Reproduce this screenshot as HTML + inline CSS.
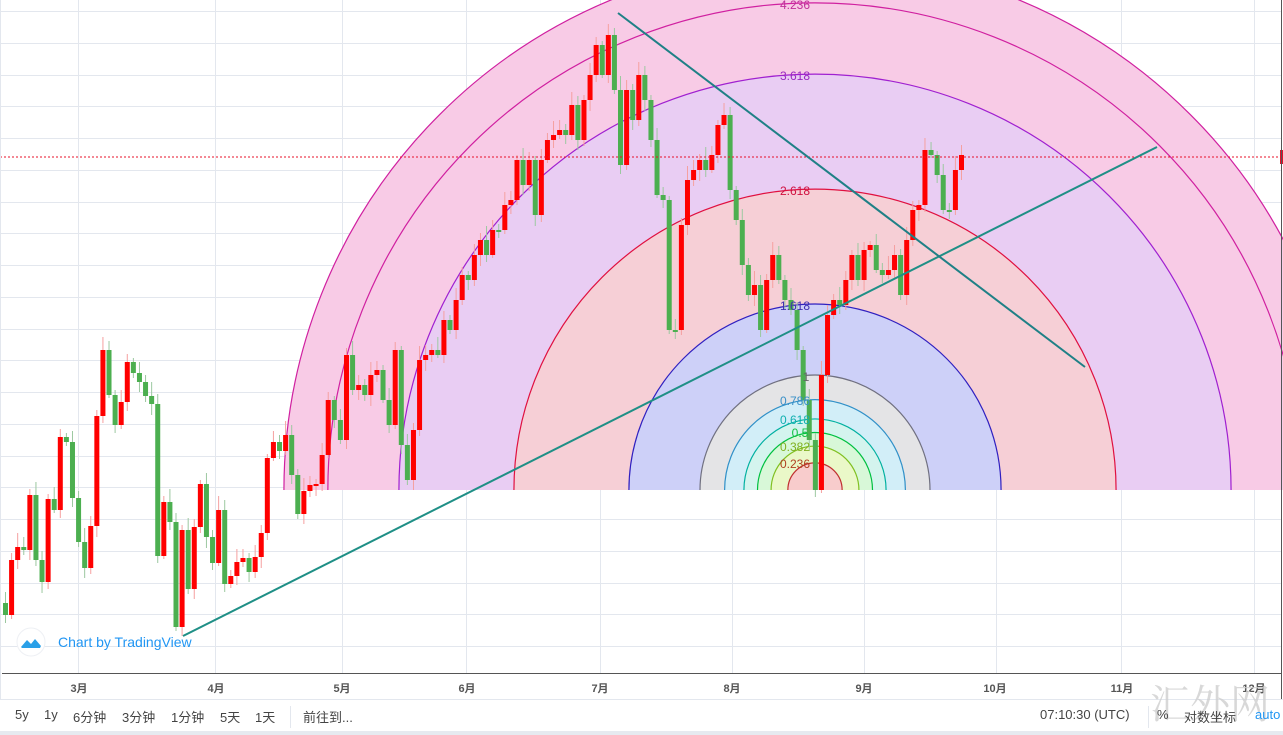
<!DOCTYPE html>
<html><head><meta charset="utf-8">
<style>
html,body{margin:0;padding:0;background:#fff;width:1283px;height:735px;overflow:hidden;font-family:"Liberation Sans","Noto Sans CJK SC",sans-serif;}
svg{position:absolute;left:0;top:0}
.bb{position:absolute;top:700px;height:32px;left:0;width:1283px;font-size:13px;color:#444}
.bb span{position:absolute;top:7px}
</style></head><body>
<svg id="s" width="1283" height="735" xmlns="http://www.w3.org/2000/svg">
<rect x="0" y="0" width="1283" height="735" fill="#fff"/>
<g id="grid" stroke="#e3e7ee" stroke-width="1"></g>
<g id="arcs"></g>
<g id="candles"></g>
<line x1="0" y1="157" x2="1281" y2="157" stroke="#e8102a" stroke-width="1" stroke-dasharray="2,2" shape-rendering="crispEdges"/>
<rect x="1280" y="150" width="3" height="14" fill="#e0102a"/>
<line x1="183" y1="636" x2="1157" y2="147" stroke="#1f8f86" stroke-width="2"/>
<line x1="618" y1="13" x2="1085" y2="367" stroke="#1f8086" stroke-width="2"/>
<g font-size="12" font-family="Liberation Sans,sans-serif" text-anchor="middle">
<text x="795" y="9" fill="#c0309a">4.236</text>
<text x="795" y="80" fill="#9a28c0">3.618</text>
<text x="795" y="195" fill="#d01040">2.618</text>
<text x="795" y="310" fill="#4030b0">1.618</text>
<text x="806" y="381" fill="#666">1</text>
<text x="795" y="405" fill="#3a90c8">0.786</text>
<text x="795" y="424" fill="#10b0b0">0.618</text>
<text x="800" y="437" fill="#10c040">0.5</text>
<text x="795" y="451" fill="#80b020">0.382</text>
<text x="795" y="468" fill="#b04020">0.236</text>
</g>
<line x1="2" y1="673.5" x2="1281" y2="673.5" stroke="#555" stroke-width="1"/>
<line x1="1281.5" y1="0" x2="1281.5" y2="700" stroke="#555" stroke-width="1"/>
<line x1="0.5" y1="0" x2="0.5" y2="700" stroke="#e3e7ee"/>
<line x1="0" y1="699.5" x2="1283" y2="699.5" stroke="#e3e7ee"/>
<rect x="0" y="731" width="1283" height="4" fill="#e6eaf0"/>
<g font-size="11" font-weight="bold" fill="#555" text-anchor="middle" font-family="Liberation Sans,Noto Sans CJK SC,sans-serif">
<text x="79" y="692">3月</text><text x="216" y="692">4月</text><text x="342" y="692">5月</text><text x="467" y="692">6月</text><text x="600" y="692">7月</text><text x="732" y="692">8月</text><text x="864" y="692">9月</text><text x="995" y="692">10月</text><text x="1122" y="692">11月</text><text x="1254" y="692">12月</text>
</g>
<circle cx="31" cy="642" r="14" fill="#fff" stroke="#eef0f4"/>
<path d="M21 647 L27 640 L31 644 L35 639 L41 646 L40 648 L22 648Z" fill="#2aa0e8"/>
<text x="58" y="647" font-size="14" fill="#2196f3" font-family="Liberation Sans,sans-serif">Chart by TradingView</text>
<line x1="290.5" y1="706" x2="290.5" y2="728" stroke="#e3e7ee"/>
<line x1="1148.5" y1="706" x2="1148.5" y2="728" stroke="#e3e7ee"/>
<text x="1150" y="718" font-size="40" fill="#cfcfcf" font-family="Noto Serif CJK SC,serif" opacity="0.8">汇外网</text>
</svg>
<div class="bb">
<span style="left:15px">5y</span><span style="left:44px">1y</span><span style="left:73px">6分钟</span><span style="left:122px">3分钟</span><span style="left:171px">1分钟</span><span style="left:220px">5天</span><span style="left:255px">1天</span><span style="left:303px">前往到...</span>
<span style="left:1040px">07:10:30 (UTC)</span><span style="left:1157px">%</span><span style="left:1184px">对数坐标</span><span style="left:1255px;color:#2196f3">auto</span>
</div>
<script>
(function(){
var NS="http://www.w3.org/2000/svg";
function el(p,t,a){var e=document.createElementNS(NS,t);for(var k in a)e.setAttribute(k,a[k]);p.appendChild(e);return e;}
var g=document.getElementById('grid');
for(var y=11;y<670;y+=31.75){el(g,'line',{x1:0,x2:1281,y1:Math.round(y)+.5,y2:Math.round(y)+.5});}
[78,215,342,466,600,732,864,996,1121,1254].forEach(function(x){el(g,'line',{x1:x+.5,x2:x+.5,y1:0,y2:673});});
var A=document.getElementById('arcs');
var cx=815,cy=490;
var L=[[4.618,'#f8cbe6','#d020a0'],[4.236,'#f8cbe6','#d020a0'],[3.618,'#e9cdf3','#a020d0'],[2.618,'#f6cfd6','#e01040'],[1.618,'#cdd0f8','#3020c0'],[1,'#e4e4e6','#707080'],[0.786,'#d2eef8','#3090c8'],[0.618,'#d4f4ee','#00b0a0'],[0.5,'#d8f8d8','#00c040'],[0.382,'#eaf8c8','#80c020'],[0.236,'#f8cccc','#c03030']];
L.forEach(function(l){var r=l[0]*115;
el(A,'path',{d:'M'+(cx-r)+' '+cy+' A'+r+' '+r+' 0 0 1 '+(cx+r)+' '+cy+' Z',fill:l[1],stroke:'none'});});
L.forEach(function(l){var r=l[0]*115;
el(A,'path',{d:'M'+(cx-r)+' '+cy+' A'+r+' '+r+' 0 0 1 '+(cx+r)+' '+cy,fill:'none',stroke:l[2],'stroke-width':1.2});});
var C=[603,615,560,547,550,495,560,582,499,510,437,442,498,542,568,526,416,350,395,425,402,362,373,382,396,404,556,502,522,627,530,589,527,484,537,563,510,584,576,562,558,572,557,533,458,442,451,435,475,514,491,485,484,455,400,420,440,355,390,385,395,375,370,400,425,350,445,480,430,360,355,350,355,320,330,300,275,280,255,240,255,230,230,205,200,160,185,160,215,160,140,135,130,135,105,140,100,75,45,75,35,90,165,90,120,75,100,140,195,200,330,330,225,180,170,160,170,155,125,115,190,220,265,295,285,330,280,255,280,300,310,350,400,440,490,375,315,300,305,280,255,280,250,245,270,275,270,255,295,240,210,205,150,155,175,210,210,170,155];
var cg=document.getElementById('candles');
var step=(961-5)/(C.length-2);
for(var i=1;i<C.length;i++){
var o=C[i-1],c=C[i];var x=5+(i-1)*step;
var tp=Math.min(o,c),bt=Math.max(o,c);
var up=c<o;var col=up?'#f00':'#4caf50';
var wt=tp-(4+((i*7)%11)),wb=bt+(3+((i*5)%9));
el(cg,'line',{x1:x+.5,x2:x+.5,y1:wt,y2:wb,stroke:up?'#f5a0a0':'#9cc8a0','stroke-width':1});
el(cg,'rect',{x:x-2,y:tp,width:5,height:Math.max(2,bt-tp),fill:col});
}
})();
</script>
</body></html>
